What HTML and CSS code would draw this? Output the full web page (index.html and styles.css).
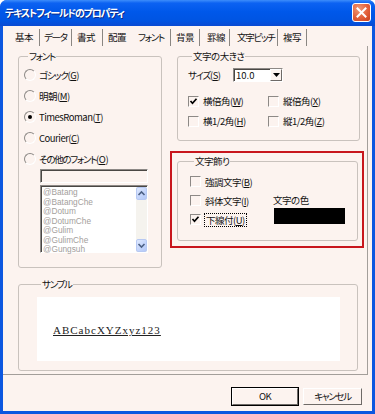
FILE: index.html
```html
<!DOCTYPE html>
<html lang="ja">
<head>
<meta charset="utf-8">
<title>テキストフィールドのプロパティ</title>
<link rel="stylesheet" href="styles.css">
</head>
<body>
<div class="window">
  <div class="titlebar">
    <span class="title">テキストフィールドのプロパティ</span>
    <span class="close">
      <svg width="19" height="19" viewBox="0 0 19 19"><path d="M5.5 5.5 L13.5 13.5 M13.5 5.5 L5.5 13.5" stroke="#fff" stroke-width="2" stroke-linecap="square"/></svg>
    </span>
  </div>
  <div class="client">
    <div class="tabs">
      <span class="tab t1">基本</span>
      <span class="tab t2 kana">データ</span>
      <span class="tab t3">書式</span>
      <span class="tab t4 nosep">配置</span>
      <span class="tab t5 active kana">フォント</span>
      <span class="tab t6">背景</span>
      <span class="tab t7">罫線</span>
      <span class="tab t8 kana">文字ピッチ</span>
      <span class="tab t9">複写</span>
    </div>
    <div class="panel">
      <div class="grid">
        <fieldset class="group fonts">
          <legend class="kana">フォント</legend>
          <div class="opt"><span class="radio"></span><span><span class="kana">ゴシック</span>(<u>G</u>)</span></div>
          <div class="opt"><span class="radio"></span><span>明朝(<u>M</u>)</span></div>
          <div class="opt"><span class="radio on"></span><span>TimesRoman(<u>T</u>)</span></div>
          <div class="opt"><span class="radio"></span><span>Courier(<u>C</u>)</span></div>
          <div class="opt"><span class="radio"></span><span><span class="kana">その他のフォント</span>(<u>O</u>)</span></div>
          <div class="textbox"></div>
          <div class="listbox">
            <ul class="items">
              <li>@Batang</li>
              <li>@BatangChe</li>
              <li>@Dotum</li>
              <li>@DotumChe</li>
              <li>@Gulim</li>
              <li>@GulimChe</li>
              <li>@Gungsuh</li>
            </ul>
            <div class="scrollbar">
              <span class="sbtn"><svg width="11" height="13" viewBox="0 0 11 13"><path d="M2.5 8 L5.5 5 L8.5 8" fill="none" stroke="#4d6185" stroke-width="1.6"/></svg></span>
              <span class="strack"></span>
              <span class="sbtn"><svg width="11" height="13" viewBox="0 0 11 13"><path d="M2.5 5 L5.5 8 L8.5 5" fill="none" stroke="#4d6185" stroke-width="1.6"/></svg></span>
            </div>
          </div>
        </fieldset>

        <div class="rightcol">
          <fieldset class="group size">
            <legend>文字の大きさ</legend>
            <div class="sizerow">
              <span class="sizelabel"><span class="kana">サイズ</span>(<u>S</u>)</span>
              <span class="combo"><span class="comboval">10.0</span><span class="combobtn"><svg width="7" height="4" viewBox="0 0 7 4"><path d="M0 0 H7 L3.5 4 Z" fill="#000"/></svg></span></span>
            </div>
            <div class="checkgrid">
              <div class="opt2"><span class="check on"><svg width="9" height="9" viewBox="0 0 9 9"><path d="M1.5 4 L3.5 6.2 L7.5 1.8" fill="none" stroke="#000" stroke-width="1.7"/></svg></span><span>横倍角(<u>W</u>)</span></div>
              <div class="opt2"><span class="check"></span><span>縦倍角(<u>X</u>)</span></div>
              <div class="opt2"><span class="check"></span><span>横1/2角(<u>H</u>)</span></div>
              <div class="opt2"><span class="check"></span><span>縦1/2角(<u>Z</u>)</span></div>
            </div>
          </fieldset>

          <div class="highlight">
            <fieldset class="group deco">
              <legend>文字飾り</legend>
              <div class="decogrid">
                <div class="decochecks">
                  <div class="opt3"><span class="check"></span><span>強調文字(<u>B</u>)</span></div>
                  <div class="opt3"><span class="check"></span><span>斜体文字(<u>I</u>)</span></div>
                  <div class="opt3"><span class="check on"><svg width="9" height="9" viewBox="0 0 9 9"><path d="M1.5 4 L3.5 6.2 L7.5 1.8" fill="none" stroke="#000" stroke-width="1.7"/></svg></span><span class="focus">下線付(<u>U</u>)</span></div>
                </div>
                <div class="colorcol">
                  <span class="colorlabel">文字の色</span>
                  <span class="swatch"></span>
                </div>
              </div>
            </fieldset>
          </div>
        </div>

        <fieldset class="group sample">
          <legend class="kana">サンプル</legend>
          <div class="preview"><span class="sampletext">ABCabcXYZxyz123</span></div>
        </fieldset>
      </div>
    </div>
    <div class="buttons">
      <span class="btn default">OK</span>
      <span class="btn kana">キャンセル</span>
    </div>
  </div>
</div>
</body>
</html>
```

FILE: styles.css
```css
html, body {
  margin: 0;
  padding: 0;
}
body {
  width: 375px;
  height: 414px;
  overflow: hidden;
  background: #fff;
  font-family: "Noto Sans CJK JP", "Noto Sans", sans-serif;
  font-size: 9.5px;
  letter-spacing: -0.5px;
  font-feature-settings: "palt";
  color: #111;
}
.kana {
  letter-spacing: -1.3px;
}
.window {
  width: 375px;
  height: 414px;
  box-sizing: border-box;
  display: flex;
  flex-direction: column;
  background: #0c57e0;
  border-radius: 7px 7px 0 0;
  padding: 0 3px 3px 3px;
}
.titlebar {
  height: 26px;
  margin: 0 -3px;
  flex: none;
  display: flex;
  align-items: center;
  justify-content: space-between;
  padding: 0 4px 0 5px;
  background: linear-gradient(#3d8dfb 0%, #0c62f2 12%, #0058ea 45%, #0054e2 80%, #0a4ad2 100%);
  border-radius: 7px 7px 0 0;
}
.title {
  color: #fff;
  font-weight: bold;
  font-size: 10px;
  letter-spacing: -1.2px;
  line-height: 14px;
  text-shadow: 1px 1px 0 #0b2a8a;
}
.close {
  width: 19px;
  height: 19px;
  box-sizing: border-box;
  border: 1px solid #fff;
  border-radius: 3px;
  background: radial-gradient(circle at 35% 30%, #f09a78 0%, #e2603a 55%, #c8401e 100%);
  display: flex;
  align-items: center;
  justify-content: center;
  margin-top: -1px;
}
.close svg {
  display: block;
  margin: -1px;
}
.client {
  flex: 1;
  background: #fcf3ef;
  display: flex;
  flex-direction: column;
}
.tabs {
  display: flex;
  height: 17px;
  margin: 3px 0 0 7px;
  flex: none;
}
.tab {
  box-sizing: border-box;
  padding-left: 5px;
  line-height: 17px;
  border-right: 1px solid #8a8682;
  white-space: nowrap;
}
.tab.nosep { border-right: none; }
.t1 { width: 30px; }
.t2 { width: 32px; padding-left: 4px; }
.t3 { width: 31px; }
.t4 { width: 30px; }
.t5 { width: 38px; }
.t6 { width: 29px; }
.t7 { width: 30px; padding-left: 7px; }
.t8 { width: 48px; padding-left: 7px; }
.t9 { width: 29px; }

.panel {
  flex: 1;
  margin-right: 4px;
  border-right: 1px solid #a39e9a;
  border-bottom: 1px solid #a39e9a;
  padding: 4px 0 0 15px;
  box-sizing: border-box;
}
.grid {
  display: grid;
  grid-template-columns: 144px 183px;
  column-gap: 15px;
  row-gap: 10px;
  align-items: start;
}
.group {
  margin: 0;
  border: 1px solid #c9c2bd;
  border-radius: 3px;
  min-width: 0;
  box-sizing: border-box;
}
.group legend {
  padding: 0 1px;
  margin-left: 4px;
  line-height: 13px;
}
.fonts {
  padding: 1px 0 14px 5px;
}
.opt {
  height: 21px;
  display: flex;
  align-items: center;
  gap: 3px;
  white-space: nowrap;
}
.radio {
  width: 12px;
  height: 12px;
  box-sizing: border-box;
  border-radius: 50%;
  border: 1px solid;
  border-color: #8d8986 #fff #fff #8d8986;
  background: #fcf3ef;
  display: flex;
  align-items: center;
  justify-content: center;
}
.radio.on::after {
  content: "";
  width: 4px;
  height: 4px;
  border-radius: 50%;
  background: #000;
}
.textbox {
  margin-left: 16px;
  width: 108px;
  height: 14px;
  box-sizing: border-box;
  border: 1px solid;
  border-color: #8d8986 #fff #fff #8d8986;
  box-shadow: inset 1px 1px 0 #4a4744;
  background: #fcf3ef;
}
.listbox {
  margin: 2px 0 0 16px;
  width: 108px;
  height: 68px;
  box-sizing: border-box;
  border: 1px solid;
  border-color: #8d8986 #fff #fff #8d8986;
  box-shadow: inset 1px 1px 0 #4a4744;
  background: #fff;
  display: flex;
  padding: 1px 0 0 1px;
}
.items {
  list-style: none;
  margin: 0;
  padding: 1px 0 0 1px;
  flex: 1;
  font-family: "Liberation Sans", sans-serif;
  font-size: 8.3px;
  letter-spacing: 0;
  line-height: 9.5px;
  color: #a4a09c;
}
.scrollbar {
  width: 11px;
  display: flex;
  flex-direction: column;
  background: #f5f3ee;
}
.sbtn {
  height: 13px;
  box-sizing: border-box;
  border: 1px solid #b7c9f3;
  border-radius: 2px;
  background: linear-gradient(135deg, #dfe9fe 0%, #c3d4fb 60%, #b4c8f6 100%);
  display: flex;
  align-items: center;
  justify-content: center;
}
.sbtn svg { display: block; flex: none; }
.strack { flex: 1; }

.rightcol {
  display: flex;
  flex-direction: column;
}
.size {
  padding: 3px 0 9px 10px;
}
.sizerow {
  height: 18px;
  display: flex;
  align-items: center;
}
.sizelabel {
  width: 45px;
  white-space: nowrap;
}
.combo {
  width: 50px;
  height: 14px;
  box-sizing: border-box;
  border: 1px solid;
  border-color: #8d8986 #fff #fff #8d8986;
  box-shadow: inset 1px 1px 0 #4a4744;
  background: #fff;
  display: flex;
  align-items: stretch;
}
.comboval {
  flex: 1;
  padding-left: 2px;
  line-height: 12px;
  letter-spacing: 0;
}
.combobtn {
  width: 12px;
  box-sizing: border-box;
  border: 1px solid;
  border-color: #fff #6e6a67 #6e6a67 #fff;
  background: #fcf3ef;
  display: flex;
  align-items: center;
  justify-content: center;
}
.combobtn svg { display: block; }
.checkgrid {
  margin-top: 7px;
  display: grid;
  grid-template-columns: 80px auto;
  grid-auto-rows: 20px;
}
.opt2, .opt3 {
  display: flex;
  align-items: center;
  gap: 4px;
  white-space: nowrap;
}
.opt3 { height: 19px; }
.check {
  width: 11px;
  height: 11px;
  box-sizing: border-box;
  border: 1px solid;
  border-color: #8d8986 #fff #fff #8d8986;
  background: #fcf3ef;
  display: flex;
  align-items: center;
  justify-content: center;
  flex: none;
}
.check svg { display: block; }
.highlight {
  margin: 10px -4px 0 -7px;
  border: 2px solid #c8161d;
  padding: 2px 4px 5px 5px;
}
.deco {
  padding: 4px 0 11px 12px;
}
.decogrid {
  display: grid;
  grid-template-columns: 83px auto;
}
.focus {
  outline: 1px dotted #000;
  outline-offset: 0;
  padding: 0 1px;
  line-height: 12px;
}
.colorcol {
  display: flex;
  flex-direction: column;
  padding-top: 22px;
}
.colorlabel {
  line-height: 13px;
  white-space: nowrap;
}
.swatch {
  margin: 1px 0 0 1px;
  width: 71px;
  height: 16px;
  background: #000;
}
.sample {
  grid-column: 1 / -1;
  width: 340px;
  padding: 6px 0 9px 18px;
}
.preview {
  width: 303px;
  height: 64px;
  background: #fff;
  box-sizing: border-box;
  padding: 26px 0 0 16px;
}
.sampletext {
  font-family: "Liberation Serif", serif;
  font-size: 11px;
  letter-spacing: 1px;
  line-height: 13px;
  text-decoration: underline;
  color: #222;
}
.buttons {
  flex: none;
  display: flex;
  justify-content: flex-end;
  gap: 5px;
  padding: 13px 10px 6px 0;
}
.btn {
  height: 17px;
  box-sizing: border-box;
  border: 1px solid;
  border-color: #fff #6e6a67 #6e6a67 #fff;
  background: #fcf3ef;
  display: flex;
  align-items: center;
  justify-content: center;
  line-height: 13px;
  width: 59px;
}
.btn.default {
  width: 66px;
  outline: 1px solid #000;
  outline-offset: 0;
}
```
